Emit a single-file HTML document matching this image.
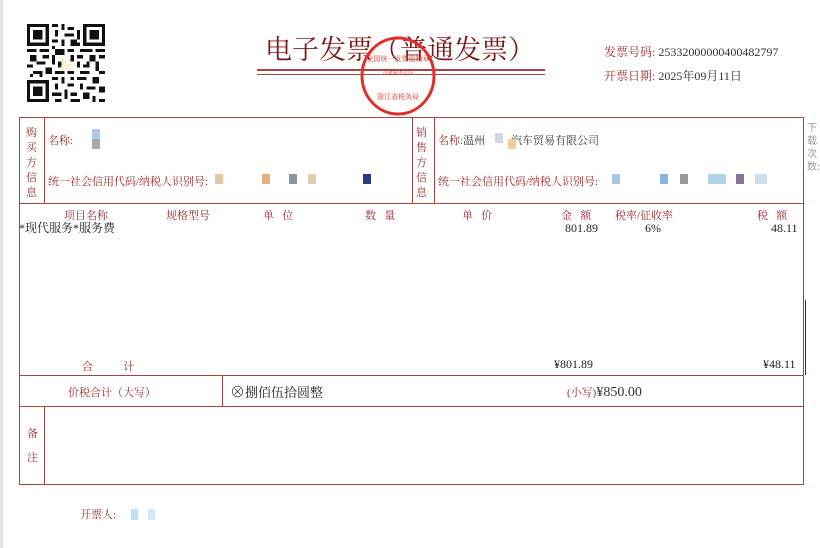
<!DOCTYPE html>
<html><head><meta charset="utf-8"><style>
*{margin:0;padding:0;box-sizing:border-box}
body{width:820px;height:548px;background:#fff;position:relative;overflow:hidden;font-family:"Liberation Serif","Noto Serif CJK SC",serif;color:#222}
.a{position:absolute;white-space:nowrap}
.r{color:#9b2c2c}
.ln{position:absolute;background:#a94444}
.k{font-family:"Liberation Serif","Noto Serif CJK SC",serif;font-size:11px}
.blur{position:absolute;width:8px;height:10px}
</style></head><body>
<div style="position:absolute;left:0;top:0;width:3px;height:548px;background:#e4e4e4"></div>
<svg class="a" style="left:26px;top:24px" width="80" height="78" viewBox="0 0 25 25" shape-rendering="crispEdges">
<g fill="#111">
<path d="M0 0h7v7H0zM18 0h7v7h-7zM0 18h7v7H0z"/>
</g><g fill="#fff"><path d="M1 1h5v5H1zM19 1h5v5h-5zM1 19h5v5H1z"/></g>
<g fill="#111"><path d="M2 2h3v3H2zM20 2h3v3h-3zM2 20h3v3H2z"/>
<path d="M8 0h2v1H8zM11 0h1v2h-1zM13 1h2v1h-2zM9 2h1v2H9zM12 3h3v1h-3zM16 2h1v3h-1zM8 5h2v1H8zM11 5h1v2h-1zM14 5h2v2h-2zM8 7h1v1H8zM0 8h3v1H0zM4 8h3v1H4zM9 8h3v2H9zM13 8h2v1h-2zM17 8h4v1h-4zM22 8h3v1h-3zM1 10h2v2H1zM5 10h2v1H5zM8 10h1v3H8zM14 10h1v2h-1zM16 10h2v1h-2zM20 10h2v2h-2zM23 10h2v1h-2zM0 13h2v1H0zM3 12h3v1H3zM10 12h1v2h-1zM16 12h1v2h-1zM18 13h2v1h-2zM22 12h1v3h-1zM2 15h3v1H2zM6 14h2v2H6zM9 15h3v1H9zM13 15h2v1h-2zM17 15h3v1h-3zM23 15h2v1h-2zM1 16h1v1H1zM8 17h2v1H8zM11 17h1v2h-1zM14 17h1v1h-1zM16 17h3v1h-3zM21 17h2v2h-2zM9 19h1v2H9zM13 19h2v1h-2zM17 19h1v2h-1zM19 20h3v1h-3zM23 20h2v2h-2zM8 22h3v1H8zM12 21h1v3h-1zM14 22h2v1h-2zM18 22h2v2h-2zM21 23h1v2h-1zM9 24h2v1H9zM14 24h3v1h-3zM23 24h2v1h-2zM16 6h1v1h-1zM19 12h1v1h-1zM4 16h1v1H4z"/></g>
<text x="12.5" y="14.5" font-size="4" fill="#f2dca0" text-anchor="middle" font-family="Noto Serif CJK SC">税</text>
</svg>
<div class="a" style="left:265px;top:28px;font-size:27px;letter-spacing:0px;color:#7e1818">电子发票（普通发票）</div>
<div class="ln" style="left:257px;top:69px;width:288px;height:2px"></div>
<div class="ln" style="left:257px;top:74px;width:288px;height:1px"></div>
<svg class="a" style="left:350px;top:33px" width="96" height="86"><ellipse cx="48" cy="43" rx="36" ry="38" fill="none" stroke="#e0302a" stroke-width="3"/>
<text x="48" y="28" font-size="7" fill="#e0302a" text-anchor="middle">全国统一发票监制章</text>
<text x="48" y="41" font-size="5" fill="#e0302a" text-anchor="middle">国家税务总局</text>
<text x="48" y="66" font-size="7" fill="#e0302a" text-anchor="middle">浙江省税务局</text></svg>
<div class="a k r" style="left:604px;top:43px;font-size:12px">发票号码: <span style="color:#333">25332000000400482797</span></div>
<div class="a k r" style="left:604px;top:67px;font-size:12px">开票日期: <span style="color:#333">2025年09月11日</span></div>

<div class="ln" style="left:19px;top:117px;width:785px;height:1px"></div>
<div class="ln" style="left:19px;top:203px;width:785px;height:1px"></div>
<div class="ln" style="left:19px;top:375px;width:785px;height:1px"></div>
<div class="ln" style="left:19px;top:406px;width:785px;height:1px"></div>
<div class="ln" style="left:19px;top:484px;width:785px;height:1px"></div>
<div class="ln" style="left:19px;top:117px;width:1px;height:368px"></div>
<div class="ln" style="left:803px;top:117px;width:1px;height:368px"></div>
<div class="ln" style="left:44px;top:117px;width:1px;height:86px"></div>
<div class="ln" style="left:412px;top:117px;width:1px;height:86px"></div>
<div class="ln" style="left:434px;top:117px;width:1px;height:86px"></div>
<div class="ln" style="left:222px;top:375px;width:1px;height:31px"></div>
<div class="ln" style="left:44px;top:406px;width:1px;height:78px"></div>
<div style="position:absolute;left:805px;top:300px;width:1px;height:75px;background:#333"></div>

<div class="a k r" style="left:26px;top:126px;width:10px;white-space:normal;line-height:15px">购买方信息</div>
<div class="a k r" style="left:416px;top:126px;width:10px;white-space:normal;line-height:15px">销售方信息</div>
<div class="a k r" style="left:48px;top:132px">名称:</div>
<div class="blur" style="left:92px;top:129px;background:#a9c8ec"></div><div class="blur" style="left:92px;top:139px;background:#aaa"></div>
<div class="a k r" style="left:48px;top:173px">统一社会信用代码/纳税人识别号:</div>
<div class="blur" style="left:215px;top:174px;background:#e2c8a2"></div>
<div class="blur" style="left:262px;top:174px;background:#e4b07c"></div>
<div class="blur" style="left:289px;top:174px;background:#8a95a2"></div>
<div class="blur" style="left:308px;top:174px;background:#e2cfb0"></div>
<div class="blur" style="left:363px;top:174px;background:#2c3c84"></div>
<div class="a k r" style="left:438px;top:132px">名称:<span style="color:#333">温州</span><span style="display:inline-block;width:26px"></span><span style="color:#333">汽车贸易有限公司</span></div>
<div class="blur" style="left:495px;top:133px;background:#cfd8e8"></div><div class="blur" style="left:508px;top:139px;background:#f0cd9c"></div>
<div class="a k r" style="left:438px;top:173px">统一社会信用代码/纳税人识别号:</div>
<div class="blur" style="left:612px;top:174px;background:#a8c4e8"></div>
<div class="blur" style="left:660px;top:174px;background:#86b4de"></div>
<div class="blur" style="left:680px;top:174px;background:#999"></div>
<div class="blur" style="left:708px;top:174px;width:18px;background:#aed4e6"></div>
<div class="blur" style="left:736px;top:174px;background:#857599"></div>
<div class="blur" style="left:755px;top:174px;width:12px;background:#cde0ea"></div>
<div class="a" style="left:807px;top:120px;width:10px;white-space:normal;font-size:10px;line-height:13px;color:#999;font-family:'Noto Sans CJK SC',sans-serif;text-align:center">下载次数:1</div>

<div class="a k r" style="top:207px;left:64px">项目名称</div>
<div class="a k r" style="top:207px;left:166px">规格型号</div>
<div class="a k r" style="top:207px;left:263px">单&nbsp;&nbsp;&nbsp;位</div>
<div class="a k r" style="top:207px;left:365px">数&nbsp;&nbsp;&nbsp;量</div>
<div class="a k r" style="top:207px;left:462px">单&nbsp;&nbsp;&nbsp;价</div>
<div class="a k r" style="top:207px;left:561px">金&nbsp;&nbsp;&nbsp;额</div>
<div class="a k r" style="top:207px;left:615px">税率/征收率</div>
<div class="a k r" style="top:207px;left:757px">税&nbsp;&nbsp;&nbsp;额</div>
<div class="a k" style="top:219px;left:19px;font-size:12px">*现代服务*服务费</div>
<div class="a k" style="top:221px;left:565px;font-size:12px">801.89</div>
<div class="a k" style="top:221px;left:645px;font-size:12px">6%</div>
<div class="a k" style="top:221px;left:771px;font-size:12px">48.11</div>
<div class="a k r" style="top:358px;left:82px">合&nbsp;&nbsp;&nbsp;&nbsp;&nbsp;&nbsp;&nbsp;&nbsp;&nbsp;&nbsp;&nbsp;计</div>
<div class="a k" style="top:357px;left:554px;font-size:12px">¥801.89</div>
<div class="a k" style="top:357px;left:763px;font-size:12px">¥48.11</div>
<div class="a k r" style="top:384px;left:68px">价税合计（大写）</div>
<div class="a k" style="top:381px;left:230px;font-size:13px"><span style="font-size:15px">⊗</span>捌佰伍拾圆整</div>
<div class="a k r" style="top:384px;left:567px">(小写)<span style="color:#333;font-size:14px">¥850.00</span></div>
<div class="a k r" style="top:425px;left:27px">备</div>
<div class="a k r" style="top:449px;left:27px">注</div>
<div class="a k r" style="top:506px;left:80px">开票人:</div>
<div class="blur" style="left:131px;top:509px;width:7px;height:11px;background:#bfe0f6"></div>
<div class="blur" style="left:148px;top:509px;width:7px;height:11px;background:#d4eaf8"></div>
</body></html>
